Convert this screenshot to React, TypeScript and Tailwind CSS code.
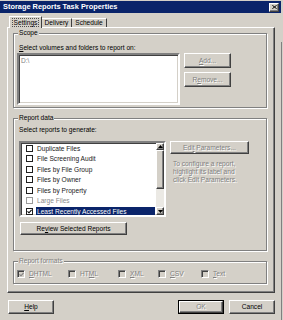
import React from "react";

const dis = "text-[#808080] [text-shadow:1px_1px_0_#ffffff]";
const raised =
  "border border-t-white border-l-white border-r-[#404040] border-b-[#404040] shadow-[inset_-1px_-1px_0_#808080]";

function U({ children }: { children: React.ReactNode }) {
  return <span className="underline decoration-1 underline-offset-[1px]">{children}</span>;
}

function Btn({
  className,
  disabled,
  children,
}: {
  className: string;
  disabled?: boolean;
  children: React.ReactNode;
}) {
  return (
    <div
      className={`box-border flex items-center justify-center bg-[#d4d0c8] leading-[8px] ${raised} ${
        disabled ? dis : "text-black"
      } ${className}`}
    >
      {children}
    </div>
  );
}

function Group({
  label,
  disabled,
  className,
  children,
}: {
  label: string;
  disabled?: boolean;
  className: string;
  children?: React.ReactNode;
}) {
  return (
    <div
      className={`box-border border border-[#808080] shadow-[1px_1px_0_#ffffff,inset_1px_1px_0_#ffffff] flex flex-col ${className}`}
    >
      <div
        className={`-mt-[5px] ml-[4px] w-fit px-[1px] bg-[#d4d0c8] leading-[8px] h-[8px] ${
          disabled ? dis : "text-black"
        }`}
      >
        {label}
      </div>
      {children}
    </div>
  );
}

function Check({ color }: { color: string }) {
  return (
    <svg width="5" height="5" viewBox="0 0 5 5" className="block">
      <path d="M0.5 2.3 L2 3.8 L4.6 0.8" stroke={color} strokeWidth="1.1" fill="none" />
    </svg>
  );
}

function ListItem({
  label,
  checked,
  selected,
  grey,
}: {
  label: string;
  checked?: boolean;
  selected?: boolean;
  grey?: boolean;
}) {
  return (
    <div className="h-[10.5px] flex items-center pl-[5px] shrink-0">
      <div
        className={`w-[7px] h-[7px] box-border border ${
          grey ? "border-[#9a9a9a]" : "border-[#202020]"
        } bg-white flex items-center justify-center shrink-0`}
      >
        {checked && <Check color="#000" />}
      </div>
      <div
        className={`ml-[3px] flex-1 h-[9px] pl-[1px] leading-[9px] whitespace-nowrap ${
          selected ? "bg-[#0a246a] text-white" : grey ? "text-[#8a8a8a]" : "text-[#1a1a1a]"
        }`}
      >
        {label}
      </div>
    </div>
  );
}

function Arrow({ up }: { up?: boolean }) {
  return (
    <svg width="5" height="3" viewBox="0 0 5 3" className="block">
      {up ? <path d="M0 3 L2.5 0 L5 3 Z" fill="#000" /> : <path d="M0 0 L2.5 3 L5 0 Z" fill="#000" />}
    </svg>
  );
}

function FmtBox({ label, checked, className }: { label: React.ReactNode; checked?: boolean; className: string }) {
  return (
    <div className={`flex items-center ${className}`}>
      <div className="w-[8px] h-[8px] box-border border border-t-[#808080] border-l-[#808080] border-b-white border-r-white shadow-[inset_1px_1px_0_#404040] bg-[#d4d0c8] flex items-center justify-center shrink-0">
        {checked && <Check color="#808080" />}
      </div>
      <div className={`ml-[4px] leading-[8px] whitespace-nowrap ${dis}`}>{label}</div>
    </div>
  );
}

export default function App() {
  return (
    <div className="w-[283px] h-[320px] bg-[#d4d0c8] flex overflow-hidden font-['Liberation_Sans',Arial,sans-serif] text-[6.6px] text-black">
      <div className="w-[281px] flex flex-col pt-[1px]">
        {/* Title bar */}
        <div className="h-[12px] bg-[#0a246a] flex items-center justify-between pl-[3px] pr-[2px]">
          <span className="text-white font-bold text-[7.4px] leading-[10px] whitespace-nowrap">
            Storage Reports Task Properties
          </span>
          <div className={`w-[10px] h-[9px] box-border bg-[#d4d0c8] flex items-center justify-center ${raised}`}>
            <svg width="5" height="4" viewBox="0 0 5 4" className="block">
              <path d="M0.3 0.2 L4.7 3.8 M4.7 0.2 L0.3 3.8" stroke="#000" strokeWidth="1" />
            </svg>
          </div>
        </div>

        {/* Tabs */}
        <div className="mt-[3px] h-[11px] flex pl-[9px]">
          <div className="relative z-10 self-start h-[12px] w-[33px] box-border bg-[#d4d0c8] border-t border-l border-r border-t-white border-l-white border-r-[#404040] flex items-center justify-center">
            <span className="border border-dotted border-[#505050] px-[1px] leading-[7px]">Settings</span>
          </div>
          <div className="self-end h-[9px] w-[30px] box-border border-t border-r border-t-white border-r-[#404040] flex items-center justify-center leading-[8px]">
            Delivery
          </div>
          <div className="self-end h-[9px] w-[35px] box-border border-t border-r border-t-white border-r-[#404040] flex items-center justify-center leading-[8px]">
            Schedule
          </div>
        </div>

        {/* Panel */}
        <div className="ml-[7px] w-[268px] h-[266px] box-border border border-t-white border-l-white border-r-[#404040] border-b-[#404040] shadow-[inset_-1px_-1px_0_#808080] pt-[5px] pl-[5px] flex flex-col">
          {/* Scope */}
          <Group label="Scope" className="w-[254px] h-[75px] shrink-0">
            <div className="mt-[7px] ml-[5px] leading-[8px] whitespace-nowrap">
              <U>S</U>elect volumes and folders to report on:
            </div>
            <div className="mt-[1px] ml-[3px] flex gap-[4px]">
              <div className="w-[163px] h-[52px] box-border bg-white border-2 border-t-[#808080] border-l-[#808080] border-r-white border-b-white shadow-[inset_1px_1px_0_#404040,inset_-1px_-1px_0_#d4d0c8] pl-[2px] pt-[2px]">
                <div className="leading-[8px] text-[#808080]">D:\</div>
              </div>
              <div className="flex flex-col gap-[4px]">
                <Btn className="w-[47px] h-[15px]" disabled>
                  <span>
                    <U>A</U>dd...
                  </span>
                </Btn>
                <Btn className="w-[47px] h-[15px]" disabled>
                  <span>
                    R<U>e</U>move...
                  </span>
                </Btn>
              </div>
            </div>
          </Group>

          {/* Report data */}
          <Group label="Report data" className="mt-[10px] w-[254px] h-[133px] shrink-0">
            <div className="mt-[4px] ml-[5px] leading-[8px] whitespace-nowrap">Select reports to generate:</div>
            <div className="mt-[7px] ml-[5px] flex">
              <div className="w-[147px] h-[76px] box-border bg-white border-2 border-t-[#808080] border-l-[#808080] border-r-white border-b-white shadow-[inset_1px_1px_0_#404040,inset_-1px_-1px_0_#d4d0c8] flex overflow-hidden">
                <div className="flex-1 flex flex-col overflow-hidden pr-[1px]">
                  <ListItem label="Duplicate Files" />
                  <ListItem label="File Screening Audit" />
                  <ListItem label="Files by File Group" />
                  <ListItem label="Files by Owner" />
                  <ListItem label="Files by Property" />
                  <ListItem label="Large Files" grey />
                  <ListItem label="Least Recently Accessed Files" checked selected />
                </div>
                <div className="w-[8px] flex flex-col">
                  <div className={`h-[7px] box-border bg-[#d4d0c8] flex items-center justify-center ${raised}`}>
                    <Arrow up />
                  </div>
                  <div className={`h-[39px] box-border bg-[#d4d0c8] ${raised}`} />
                  <div className="flex-1 bg-[#ebe9e4]" />
                  <div className={`h-[8px] box-border bg-[#d4d0c8] flex items-center justify-center ${raised}`}>
                    <Arrow />
                  </div>
                </div>
              </div>
              <div className="ml-[4px] flex flex-col">
                <Btn className="w-[79px] h-[13px]" disabled>
                  <span>
                    Edi<U>t</U> Parameters...
                  </span>
                </Btn>
                <div className={`mt-[6px] ml-[3px] leading-[8px] ${dis}`}>
                  <div>To configure a report,</div>
                  <div>highlight its label and</div>
                  <div>click Edit Parameters.</div>
                </div>
              </div>
            </div>
            <div className="mt-[5px] ml-[6px]">
              <Btn className="w-[107px] h-[13px]">
                <span>
                  Re<U>v</U>iew Selected Reports
                </span>
              </Btn>
            </div>
          </Group>

          {/* Report formats */}
          <Group label="Report formats" disabled className="mt-[10px] w-[254px] h-[23px] shrink-0">
            <div className="mt-[5px] ml-[3px] flex h-[8px]">
              <FmtBox
                checked
                className="w-[51px]"
                label={
                  <span>
                    <U>D</U>HTML
                  </span>
                }
              />
              <FmtBox
                className="w-[50px]"
                label={
                  <span>
                    HT<U>M</U>L
                  </span>
                }
              />
              <FmtBox
                className="w-[40px]"
                label={
                  <span>
                    <U>X</U>ML
                  </span>
                }
              />
              <FmtBox
                className="w-[43px]"
                label={
                  <span>
                    <U>C</U>SV
                  </span>
                }
              />
              <FmtBox
                className="w-[40px]"
                label={
                  <span>
                    <U>T</U>ext
                  </span>
                }
              />
            </div>
          </Group>
        </div>

        {/* Footer */}
        <div className="mt-[7px] flex">
          <div className="ml-[8px]">
            <Btn className="w-[46px] h-[14px]">
              <span>
                <U>H</U>elp
              </span>
            </Btn>
          </div>
          <div className="ml-auto mr-[6px] flex gap-[5px]">
            <div className="w-[46px] h-[14px] box-border border border-[#000]">
              <Btn className="w-full h-full" disabled>
                OK
              </Btn>
            </div>
            <Btn className="w-[46px] h-[14px]">Cancel</Btn>
          </div>
        </div>
      </div>
      <div className="w-[2px] pt-[42px] flex">
        <div className="w-[1px] h-full bg-[#808080]" />
      </div>
    </div>
  );
}
